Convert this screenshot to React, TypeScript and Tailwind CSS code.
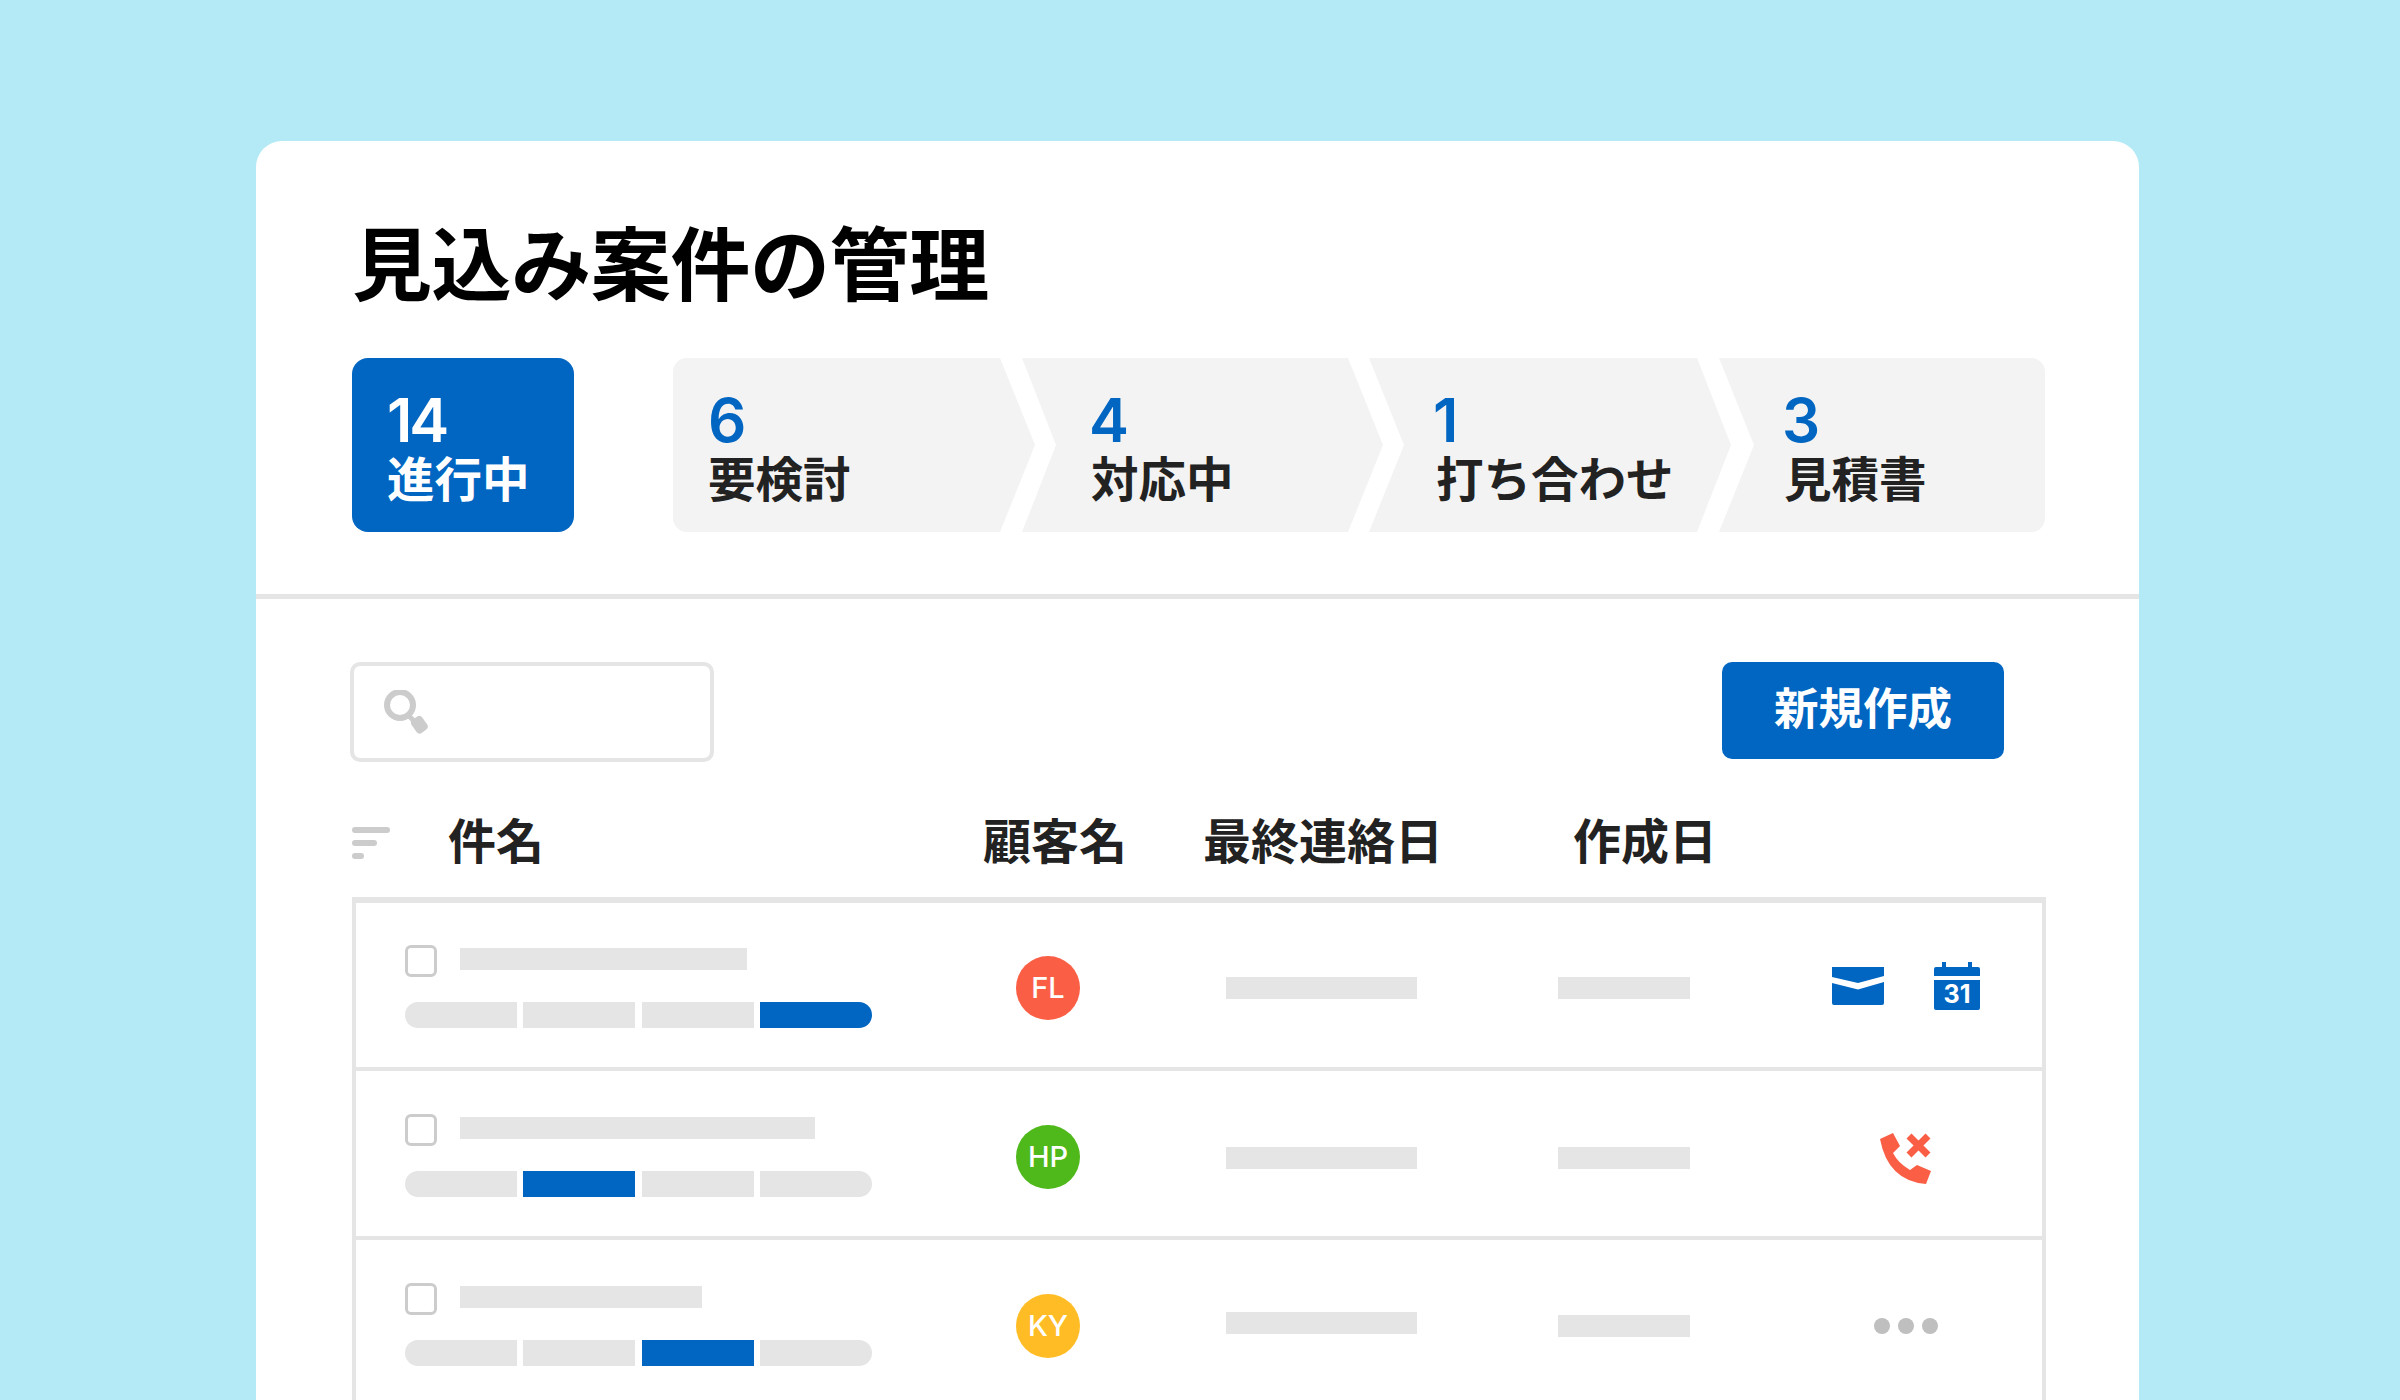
import { Fragment } from 'react';

const cjk = "font-['Noto_Sans_CJK_JP',sans-serif]";

const stages = [
  {
    count: '6',
    label: '要検討',
    num: '',
    box: 'w-[362px] pl-[35px] rounded-l-[14px] [clip-path:polygon(0_0,327px_0,100%_50%,327px_100%,0_100%)]',
  },
  {
    count: '4',
    label: '対応中',
    num: '-ml-[2px]',
    box: '-ml-[13px] w-[361px] pl-[69px] [clip-path:polygon(0_0,326px_0,100%_50%,326px_100%,0_100%,34px_50%)]',
  },
  {
    count: '1',
    label: '打ち合わせ',
    num: '-ml-[3px]',
    box: '-ml-[14px] w-[362px] pl-[67px] [clip-path:polygon(0_0,328px_0,100%_50%,328px_100%,0_100%,35px_50%)]',
  },
  {
    count: '3',
    label: '見積書',
    num: '-ml-[2px]',
    box: '-ml-[12px] w-[326px] pl-[65px] rounded-r-[14px] [clip-path:polygon(0_0,100%_0,100%_100%,0_100%,35px_50%)]',
  },
];

function MailIcon() {
  return (
    <svg width="52" height="38" viewBox="0 0 52 38" fill="#0066c2">
      <path d="M0 0H52V9L26 16L0 10Z" />
      <path d="M0 16L26 22.5L52 15V36A2 2 0 0 1 50 38H2A2 2 0 0 1 0 36Z" />
    </svg>
  );
}

function CalendarIcon() {
  return (
    <svg width="46" height="48" viewBox="0 0 46 48" fill="#0066c2">
      <rect x="8" y="0" width="4" height="8" />
      <rect x="34" y="0" width="4" height="8" />
      <path d="M2 5H44A2 2 0 0 1 46 7V14H0V7A2 2 0 0 1 2 5Z" />
      <path d="M0 18H46V46A2 2 0 0 1 44 48H2A2 2 0 0 1 0 46Z" />
      <text
        x="23"
        y="41"
        textAnchor="middle"
        fontFamily="Inter, sans-serif"
        fontWeight="700"
        fontSize="25"
        fill="#fff"
      >
        31
      </text>
    </svg>
  );
}

function MissedCallIcon() {
  return (
    <svg width="51" height="51" viewBox="0 0 51 51" fill="#fa5f45">
      <path d="M0 6L13 0L20 13L13 20Q18 30 30 37L37 32L51 38L46 51Q8 48 0 6Z" />
      <path d="M29 3L48 22M48 3L29 22" stroke="#fa5f45" strokeWidth="7" fill="none" />
    </svg>
  );
}

function MoreIcon() {
  return (
    <div className="flex gap-2">
      <div className="h-4 w-4 rounded-full bg-[#bfbfbf]" />
      <div className="h-4 w-4 rounded-full bg-[#bfbfbf]" />
      <div className="h-4 w-4 rounded-full bg-[#bfbfbf]" />
    </div>
  );
}

function SearchIcon() {
  return (
    <svg width="45" height="44" viewBox="0 0 45 44">
      <circle cx="16" cy="15" r="13" fill="none" stroke="#cccccc" strokeWidth="6" />
      <path d="M24 25L30 31" stroke="#cccccc" strokeWidth="5" />
      <rect x="29" y="27" width="13" height="16" rx="4" transform="rotate(-35 35 35)" fill="#cccccc" />
    </svg>
  );
}

const rows = [
  {
    titleWidth: 'w-[287px]',
    active: 3,
    initials: 'FL',
    color: 'bg-[#fa5f45]',
    top: 'mt-[36px]',
    dateBar: '',
    createdBar: '',
    actions: (
      <div className="mb-[4px] ml-[142px] flex items-center gap-[50px]">
        <MailIcon />
        <CalendarIcon />
      </div>
    ),
  },
  {
    titleWidth: 'w-[355px]',
    active: 1,
    initials: 'HP',
    color: 'bg-[#4fb81a]',
    top: 'mt-[37px]',
    dateBar: 'mt-[2px]',
    createdBar: 'mt-[2px]',
    actions: (
      <div className="mt-[4px] ml-[190px] flex items-center">
        <MissedCallIcon />
      </div>
    ),
  },
  {
    titleWidth: 'w-[242px]',
    active: 2,
    initials: 'KY',
    color: 'bg-[#ffbc25]',
    top: 'mt-[37px]',
    dateBar: 'mb-[5px]',
    createdBar: 'mt-[1px]',
    actions: (
      <div className="ml-[184px] flex items-center">
        <MoreIcon />
      </div>
    ),
  },
];

function Progress({ active }: { active: number }) {
  return (
    <div className="mt-[25px] flex w-[467px] gap-[6.5px] overflow-hidden rounded-full">
      {[0, 1, 2, 3].map((i) => (
        <div key={i} className={`h-[26px] flex-1 ${i === active ? 'bg-[#0066c2]' : 'bg-[#e5e5e5]'}`} />
      ))}
    </div>
  );
}

function App() {
  return (
    <div className={`h-[1400px] w-full overflow-hidden bg-[#b3eaf5] pt-[141px] pl-[256px] ${cjk}`}>
      <div className="min-h-[1400px] w-[1883px] rounded-t-[26px] bg-white">
        <div className="border-b-[5px] border-[#e5e5e5] pr-[90px] pb-[62px] pl-[96px]">
          <h1 className="pt-[74px] text-[80px] leading-[88px] font-bold tracking-[-0.4px] text-black">
            見込み案件の管理
          </h1>

          <div className="mt-[55px] flex">
            <div className="flex h-[174px] w-[222px] flex-col justify-center rounded-[16px] bg-[#0066c2] pl-[35px] text-white">
              <div className="pt-[2px] font-['Inter',sans-serif] text-[60px] leading-[64px] font-semibold tracking-[-3px]">
                14
              </div>
              <div className="-mt-[2px] text-[47.5px] leading-[54px] font-bold">進行中</div>
            </div>

            <div className="ml-[99px] flex">
              {stages.map((s) => (
                <div key={s.label} className={`flex h-[174px] flex-col justify-center bg-[#f3f3f3] ${s.box}`}>
                  <div
                    className={`pt-[2px] font-['Inter',sans-serif] text-[60px] leading-[64px] font-semibold text-[#0066c2] ${s.num}`}
                  >
                    {s.count}
                  </div>
                  <div className="-mt-[2px] text-[47.5px] leading-[54px] font-bold text-[#222222]">{s.label}</div>
                </div>
              ))}
            </div>
          </div>
        </div>

        <div className="pt-[63px] pl-[94px]">
          <div className="flex items-start justify-between pr-[135px]">
            <div className="flex h-[100px] w-[364px] items-center rounded-[10px] border-[4px] border-[#e5e5e5] pl-[30px]">
              <SearchIcon />
            </div>
            <div className="flex h-[97px] w-[282px] items-center justify-center rounded-[10px] bg-[#0066c2] pb-[9px] text-[44.5px] font-bold text-white">
              新規作成
            </div>
          </div>

          <div className="mt-[49px] ml-[2px] flex h-[60px] items-center text-[48px] font-bold text-[#222222]">
            <div className="mt-[3px] flex w-[96px] flex-col gap-[7px]">
              <div className="h-[6px] w-[38px] rounded-full bg-[#cccccc]" />
              <div className="h-[6px] w-[25px] rounded-full bg-[#cccccc]" />
              <div className="h-[6px] w-[12px] rounded-full bg-[#cccccc]" />
            </div>
            <div className="w-[535px] pb-[6px]">件名</div>
            <div className="w-[220px] pb-[6px]">顧客名</div>
            <div className="w-[370px] pb-[6px]">最終連絡日</div>
            <div className="pb-[6px]">作成日</div>
          </div>

          <div className="mt-[26px] ml-[2px] w-[1694px] border-x-[4px] border-t-[6px] border-[#e5e5e5]">
            {rows.map((row, i) => (
              <Fragment key={row.initials}>
                <div
                  className={`flex items-center border-b-[4px] border-[#e5e5e5] pt-[6px] ${i === 0 ? 'h-[168px]' : 'h-[169px]'}`}
                >
                  <div className={`w-[660px] self-start pl-[49px] ${row.top}`}>
                    <div className="flex items-start">
                      <div className="h-[32px] w-[32px] rounded-[6px] border-[3px] border-[#cccccc]" />
                      <div className={`mt-[3px] ml-[23px] h-[22px] bg-[#e5e5e5] ${row.titleWidth}`} />
                    </div>
                    <Progress active={row.active} />
                  </div>

                  <div
                    className={`flex h-[64px] w-[64px] items-center justify-center rounded-full font-['Inter',sans-serif] text-[29px] font-medium text-white ${row.color}`}
                  >
                    {row.initials}
                  </div>

                  <div className={`ml-[146px] h-[22px] w-[191px] bg-[#e5e5e5] ${row.dateBar}`} />
                  <div className={`ml-[141px] h-[22px] w-[132px] bg-[#e5e5e5] ${row.createdBar}`} />
                  {row.actions}
                </div>
              </Fragment>
            ))}
          </div>
        </div>
      </div>
    </div>
  );
}

export default App;
